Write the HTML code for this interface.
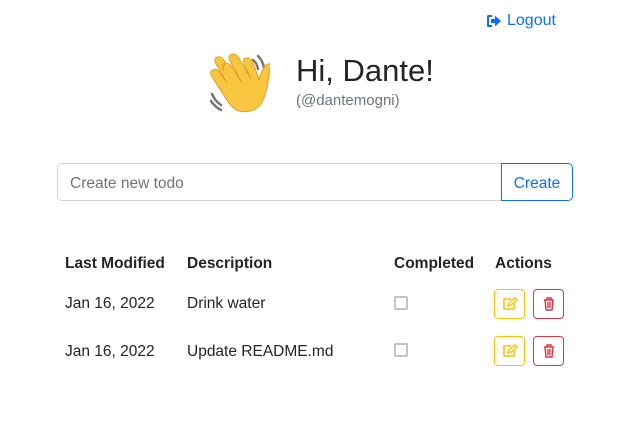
<!DOCTYPE html><html><head><style>
body{margin:0;width:627px;height:424px;background:#fff;font-family:"Liberation Sans",sans-serif;color:#212529;position:relative;overflow:hidden}
.a{position:absolute}
.btn{position:absolute;width:31px;height:30px;border:1px solid;border-radius:4px;box-sizing:border-box;display:flex;align-items:center;justify-content:center}
.cb{position:absolute;width:14px;height:14px;border:2px solid #c4c4c8;border-radius:2px;box-sizing:border-box}
.h{font-weight:bold;font-size:15.5px}
.t{font-size:15.5px}
</style></head><body>
<div class="a" style="left:486px;top:12px;color:#0d6efd;font-size:16px;display:flex;align-items:center;gap:5px">
<svg width="16" height="14" viewBox="0 0 16 14"><path d="M6 1H2.5A1.5 1.5 0 0 0 1 2.5v9A1.5 1.5 0 0 0 2.5 13H6V11H3V3H6z" fill="#0d6efd"/><path d="M5 5H9V1.5L15 7L9 12.5V9H5z" fill="#0d6efd"/></svg>Logout</div>
<svg class="a" style="left:208px;top:50px" width="62" height="74" viewBox="0 0 62 74">
<g stroke="#777" stroke-width="2.5" fill="none" stroke-linecap="round"><path d="M50 6q5 5 6 12"/><path d="M45 10q4 3 5 9"/><path d="M4 44q3 7 9 11"/><path d="M3 51q4 6 10 9"/></g>
<path d="M15 20q-3-6 3-7 4 0 7 6l9 14-12-22q-3-6 3-7 4 0 7 6l11 19-7-15q-2-6 3-6 4 0 6 5l6 16q3-10 7-14 4-3 5 1-2 8-3 16-2 14-7 22-8 10-22 7-8-3-14-14l-13-20q-3-5 1-7 4-2 7 3l7 10-11-19q-3-6 2-7 4-1 7 5z" fill="#f9c642" stroke="#e0a020" stroke-width="1"/>
</svg>
<div class="a" style="left:296px;top:53px;font-size:31px;color:#212529">Hi, Dante!</div>
<div class="a" style="left:296px;top:92px;font-size:15px;color:#6c757d">(@dantemogni)</div>
<div class="a" style="left:57px;top:163px;width:445px;height:38px;border:1px solid #ced4da;border-radius:5px 0 0 5px;box-sizing:border-box"></div>
<div class="a" style="left:70px;top:175px;font-size:15.5px;color:#6c757d">Create new todo</div>
<div class="a" style="left:501px;top:163px;width:72px;height:38px;border:1px solid #0d6efd;border-radius:0 5px 5px 0;box-sizing:border-box;color:#0d6efd;font-size:15.5px;display:flex;align-items:center;justify-content:center;padding-top:3px">Create</div>
<div class="a h" style="left:65px;top:255px">Last Modified</div>
<div class="a h" style="left:187px;top:255px">Description</div>
<div class="a h" style="left:394px;top:255px">Completed</div>
<div class="a h" style="left:495px;top:255px">Actions</div>
<div class="a t" style="left:65px;top:295px">Jan 16, 2022</div>
<div class="a t" style="left:187px;top:295px">Drink water</div>
<div class="a t" style="left:65px;top:343px">Jan 16, 2022</div>
<div class="a t" style="left:187px;top:343px">Update README.md</div>
<div class="cb" style="left:394px;top:296px"></div>
<div class="cb" style="left:394px;top:343px"></div>
<div class="btn" style="left:494px;top:289px;border-color:#ffc107"><svg width="16" height="14" viewBox="0 0 16 14"><path d="M9 2H2v10h10V6" fill="none" stroke="#ffc107" stroke-width="1.6"/><path d="M6 9l1-3 6-5 2 2-6 5z" fill="none" stroke="#ffc107" stroke-width="1.4"/></svg></div>
<div class="btn" style="left:533px;top:289px;border-color:#dc3545"><svg width="12" height="14" viewBox="0 0 12 14"><path d="M1 3h10M4 3V1h4v2M2 3l1 10h6l1-10M5 5v6M7 5v6" fill="none" stroke="#dc3545" stroke-width="1.4"/></svg></div>
<div class="btn" style="left:494px;top:336px;border-color:#ffc107"><svg width="16" height="14" viewBox="0 0 16 14"><path d="M9 2H2v10h10V6" fill="none" stroke="#ffc107" stroke-width="1.6"/><path d="M6 9l1-3 6-5 2 2-6 5z" fill="none" stroke="#ffc107" stroke-width="1.4"/></svg></div>
<div class="btn" style="left:533px;top:336px;border-color:#dc3545"><svg width="12" height="14" viewBox="0 0 12 14"><path d="M1 3h10M4 3V1h4v2M2 3l1 10h6l1-10M5 5v6M7 5v6" fill="none" stroke="#dc3545" stroke-width="1.4"/></svg></div>
</body></html>
